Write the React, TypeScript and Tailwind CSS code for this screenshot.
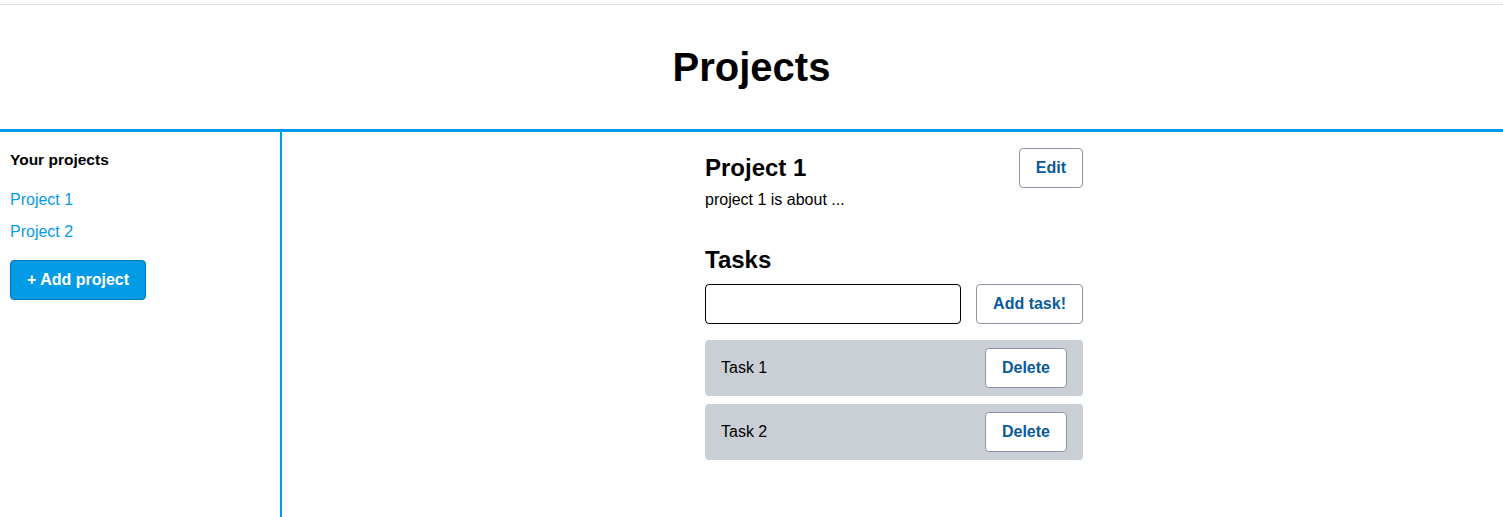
import React from "react";

const tasks = ["Task 1", "Task 2"];
const projects = ["Project 1", "Project 2"];

function OutlineButton({ children }: { children: React.ReactNode }) {
  return (
    <button className="h-10 px-4 whitespace-nowrap border border-[#8d96a2] rounded-[4px] bg-white text-[#0a5a9c] font-bold text-[16px] leading-none">
      {children}
    </button>
  );
}

export default function App() {
  return (
    <div className="min-h-screen flex flex-col bg-white text-black font-['Liberation_Sans',Arial,sans-serif]">
      {/* Header */}
      <div className="pt-1">
        <header className="border-t border-[#dedede] py-[38px] border-b-[3px] border-b-[#039be5]">
          <h1 className="text-center text-[40px] leading-[48px] font-bold">Projects</h1>
        </header>
      </div>

      <div className="flex flex-1">
        {/* Sidebar */}
        <aside className="w-[282px] shrink-0 border-r-2 border-[#039be5] pl-[10px] pt-[18px]">
          <h4 className="text-[15.5px] leading-5 font-bold">Your projects</h4>
          <ul className="mt-[18px] flex flex-col gap-2">
            {projects.map((p) => (
              <li key={p}>
                <a href="#" className="text-[16px] leading-6 text-[#039be5]">
                  {p}
                </a>
              </li>
            ))}
          </ul>
          <button className="mt-[16px] h-10 w-[136px] bg-[#039be5] border border-[#0277bd] rounded-[4px] text-white font-bold text-[16px] leading-none">
            + Add project
          </button>
        </aside>

        {/* Main */}
        <main className="flex-1 flex justify-center pt-4 pl-[3px]">
          <div className="w-[378px]">
            <div className="flex items-center justify-between">
              <h2 className="text-[24px] leading-8 font-bold">Project 1</h2>
              <OutlineButton>Edit</OutlineButton>
            </div>
            <p className="text-[16px] leading-6">project 1 is about ...</p>

            <h2 className="mt-[32px] text-[24px] leading-8 font-bold">Tasks</h2>
            <div className="mt-2 flex items-center justify-between">
              <input
                type="text"
                className="w-[256px] h-10 border border-black rounded-[4px] px-2 outline-none"
              />
              <OutlineButton>Add task!</OutlineButton>
            </div>

            <ul className="mt-4 flex flex-col gap-2">
              {tasks.map((t) => (
                <li
                  key={t}
                  className="flex items-center justify-between bg-[#cacfd6] rounded-[4px] px-4 py-2"
                >
                  <span className="text-[16px]">{t}</span>
                  <OutlineButton>Delete</OutlineButton>
                </li>
              ))}
            </ul>
          </div>
        </main>
      </div>
    </div>
  );
}
